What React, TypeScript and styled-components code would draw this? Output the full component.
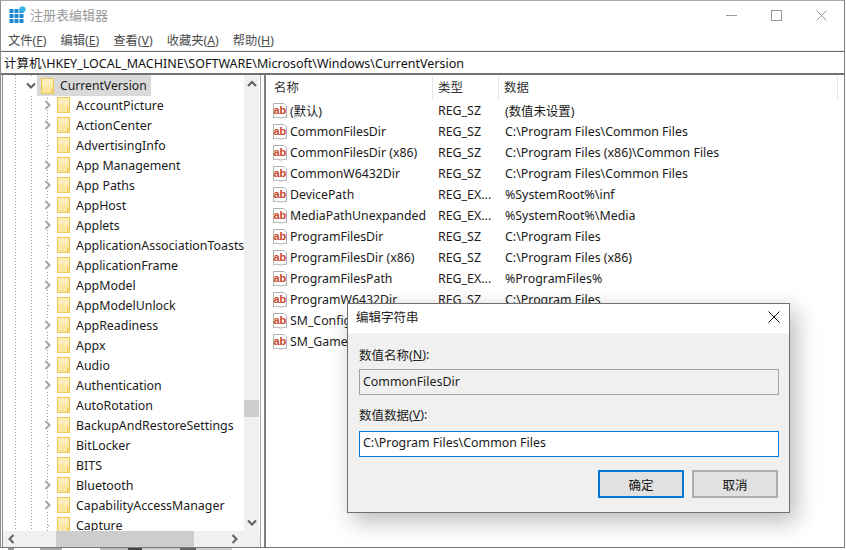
import React from "react";
import styled, { createGlobalStyle } from "styled-components";

const GlobalStyle = createGlobalStyle`
    html, body {
        margin: 0;
        padding: 0;
        background: #fff;
    }
    * {
        box-sizing: border-box;
    }
`;

const FONT = `"Noto Sans", "Noto Sans CJK SC", sans-serif`;

const Page = styled.div`
    width: 846px;
    height: 550px;
    position: relative;
    overflow: hidden;
    font-family: ${FONT};
    font-size: 12.4px;
    color: #1a1a1a;
    background: #fff;
`;

const Frame = styled.div`
    width: 845px;
    height: 548px;
    display: flex;
    flex-direction: column;
    border-top: 1px solid #a9a9a9;
    border-right: 1px solid #7a7a7a;
    border-left: 1px solid #8c8c8c;
`;

const CutOff = styled.div`
    height: 2px;
    background: linear-gradient(90deg,
        #fff 0 8px, #999 8px 14px, #fff 14px 40px, #aaa 40px 62px, #fff 62px 100px,
        #bbb 100px 128px, #444 128px 142px, #ccc 142px 180px, #666 180px 196px,
        #ccc 196px 232px, #fff 232px 846px);
`;

const TitleBar = styled.div`
    height: 28px;
    flex: none;
    display: flex;
    align-items: center;
    padding-left: 8px;
`;

const TitleText = styled.span`
    margin-left: 4px;
    color: #9a9a9a;
    font-size: 13px;
    flex: 1;
    padding-bottom: 1px;
`;

const WindowButton = styled.div`
    width: 45px;
    height: 28px;
    display: flex;
    align-items: center;
    justify-content: center;
`;

const MenuBar = styled.div`
    height: 22px;
    flex: none;
    display: flex;
    align-items: center;
    gap: 14px;
    padding: 1px 0 0 7px;
    color: #4c4c4c;
    font-size: 12.3px;
    border-bottom: 1px solid #f0f0f0;
`;

const MenuItem = styled.span`
    u {
        text-underline-offset: 1px;
    }
`;

const AddressBar = styled.div`
    height: 24px;
    flex: none;
    display: flex;
    align-items: center;
    padding-left: 3px;
    border-top: 1px solid #6d6d6d;
    border-bottom: 2px solid #6f6f78;
    color: #111;
    font-size: 12.5px;
`;

const Main = styled.div`
    flex: 1;
    min-height: 0;
    display: flex;
    border-bottom: 1px solid #777;
`;

const TreePanel = styled.div`
    width: 259px;
    flex: none;
    margin-left: 1px;
    padding-right: 1px;
    display: grid;
    grid-template-columns: 1fr 15px;
    grid-template-rows: 1fr 16px;
    border-left: 1px solid #8a8a8a;
    border-right: 1px solid #a8a8a8;
    overflow: hidden;
`;

const TreeList = styled.div`
    overflow: hidden;
    white-space: nowrap;
    background-image:
        repeating-linear-gradient(180deg, #9a9a9a 0 1px, transparent 1px 3px),
        repeating-linear-gradient(180deg, #9a9a9a 0 1px, transparent 1px 3px);
    background-size: 1px 100%;
    background-position: 12px 0, 28px 0;
    background-repeat: no-repeat;
`;

const CurrentRow = styled.div`
    height: 21px;
    display: flex;
    align-items: center;
    padding-left: 21px;
    margin-bottom: -1px;
    font-size: 12.2px;
`;

const CurrentToggle = styled.div`
    width: 13px;
    height: 20px;
    flex: none;
    display: flex;
    align-items: center;
    justify-content: center;
    background: #fff;
`;

const CurrentLabel = styled.div`
    height: 21px;
    display: flex;
    align-items: center;
    gap: 6px;
    padding: 0 4px;
    background: #d9d9d9;
`;

const Children = styled.div`
    background-image: repeating-linear-gradient(180deg, #9a9a9a 0 1px, transparent 1px 3px);
    background-size: 1px 100%;
    background-position: 44px 0;
    background-repeat: no-repeat;
`;

const TreeRow = styled.div`
    height: 20px;
    display: flex;
    align-items: center;
    padding-left: 36px;
    gap: 6px;
`;

const Toggle = styled.div<{ $leaf: boolean }>`
    width: 16px;
    height: ${props => props.$leaf ? "1px" : "13px"};
    margin-right: -4px;
    flex: none;
    display: flex;
    align-items: center;
    justify-content: center;
    background: ${props => props.$leaf
        ? "repeating-linear-gradient(90deg, transparent 0 9px, #9a9a9a 9px 10px, transparent 10px 12px)"
        : "transparent"};
`;

const ChevronBack = styled.span`
    display: flex;
    background: #fff;
`;

const VScroll = styled.div`
    background: #f0f0f0;
    display: flex;
    flex-direction: column;
    align-items: center;
`;

const VThumb = styled.div`
    width: 15px;
    height: 17px;
    margin-top: 308px;
    background: #cdcdcd;
`;

const ScrollArrow = styled.div<{ $end?: boolean }>`
    height: 17px;
    width: 15px;
    flex: none;
    display: flex;
    align-items: center;
    justify-content: center;
    margin-top: ${props => props.$end ? "auto" : "0"};
`;

const HScroll = styled.div`
    grid-column: 1 / 3;
    margin-right: -1px;
    background: #f0f0f0;
    display: flex;
    align-items: center;
    padding-right: 17px;
`;

const HArrow = styled.div`
    width: 17px;
    height: 16px;
    flex: none;
    display: flex;
    align-items: center;
    justify-content: center;
`;

const HThumb = styled.div`
    width: 138px;
    height: 16px;
    margin-left: 36px;
    background: #cdcdcd;
    margin-right: auto;
`;

const ValuePanel = styled.div`
    flex: 1;
    min-width: 0;
    margin-left: 3px;
    border-left: 2px solid #7f7f7f;
    overflow: hidden;
`;

const HeaderRow = styled.div`
    height: 25px;
    display: flex;
    color: #333;
`;

const HeaderCell = styled.div<{ $width: number }>`
    width: ${props => props.$width}px;
    flex: none;
    display: flex;
    align-items: center;
    padding: 0 0 1px 5px;
    border-right: 1px solid #e5e5e5;
    margin: 1px 0;
    &:first-child {
        padding-left: 8px;
    }
`;

const ValueRow = styled.div`
    height: 21px;
    display: flex;
    align-items: center;
    white-space: nowrap;
`;

const NameCell = styled.div`
    width: 168px;
    flex: none;
    display: flex;
    align-items: center;
    gap: 2px;
    padding-left: 6px;
    overflow: hidden;
    font-size: 12.3px;
`;

const TypeCell = styled.div`
    width: 71px;
    flex: none;
    padding-left: 4px;
`;

const DataCell = styled.div`
    flex: 1;
`;

const Dialog = styled.div`
    position: absolute;
    left: 347px;
    top: 303px;
    width: 443px;
    height: 210px;
    display: flex;
    flex-direction: column;
    background: #f0f0f0;
    border: 1px solid #6f6f6f;
    box-shadow: 6px 8px 22px rgba(0, 0, 0, 0.28);
`;

const DialogTitleBar = styled.div`
    height: 29px;
    flex: none;
    display: flex;
    align-items: center;
    justify-content: space-between;
    padding: 0 9px 4px 8px;
    background: #fff;
    color: #222;
    font-size: 12.5px;
`;

const DialogBody = styled.div`
    flex: 1;
    padding: 9px 10px 0 11px;
    display: flex;
    flex-direction: column;
`;

const FieldLabel = styled.label<{ $gap: number }>`
    height: 24px;
    margin-bottom: ${props => props.$gap}px;
    display: flex;
    align-items: center;
    color: #222;
    font-size: 12.5px;
`;

const Field = styled.div<{ $focus?: boolean }>`
    height: 26px;
    display: flex;
    align-items: center;
    padding: 0 0 ${props => props.$focus ? "3px" : "1px"} 3px;
    margin-bottom: 7px;
    background: ${props => props.$focus ? "#fff" : "#f0f0f0"};
    border: 1px solid ${props => props.$focus ? "#0078d7" : "#a3a3a3"};
    color: #1a1a1a;
`;

const ButtonRow = styled.div`
    display: flex;
    justify-content: flex-end;
    gap: 8px;
    margin-top: 6px;
    padding-right: 1px;
`;

const DialogButton = styled.div<{ $primary?: boolean }>`
    width: 86px;
    height: 28px;
    display: flex;
    align-items: center;
    justify-content: center;
    background: #e1e1e1;
    border: 2px solid ${props => props.$primary ? "#0078d7" : "#adadad"};
    color: #111;
    font-size: 12.5px;
`;

function AppIcon() {
    const cells = [[0, 3], [5, 3], [10, 3], [0, 8], [5, 8], [10, 8], [0, 13], [5, 13], [10, 13]];
    return (
        <svg width="17" height="18" viewBox="0 0 17 18">
            {cells.map(([x, y], i) => <rect key={i} x={x + 0.5} y={y} width="4" height="4" fill="#1b8ad0" />)}
            <path d="M12 0.5 L15 0.5 L16.5 2 L16.5 4.5 L15 6 L12 6 L10.5 4.5 L10.5 2 Z" fill="#35b4e8" />
        </svg>
    );
}

function FolderIcon() {
    return (
        <svg width="13" height="16" viewBox="0 0 13 16" style={{ flex: "none" }}>
            <rect x="0.5" y="0.5" width="12" height="15" fill="#fde7a0" stroke="#ecc653" />
            <rect x="1" y="1" width="11" height="7" fill="#fdeeb9" />
            <path d="M10.5 15.5 V11.5 H12.5" fill="none" stroke="#ecc653" />
        </svg>
    );
}

function ChevronRight({ color = "#a6a6a6" }: { color?: string }) {
    return (
        <svg width="7" height="10" viewBox="0 0 7 10">
            <path d="M1.5 1 L5.5 5 L1.5 9" fill="none" stroke={color} strokeWidth="2" />
        </svg>
    );
}

function ChevronLeft() {
    return (
        <svg width="7" height="10" viewBox="0 0 7 10">
            <path d="M5.5 1 L1.5 5 L5.5 9" fill="none" stroke="#606060" strokeWidth="2" />
        </svg>
    );
}

function ChevronDown() {
    return (
        <svg width="10" height="8" viewBox="0 0 10 8">
            <path d="M1 1.5 L5 5.5 L9 1.5" fill="none" stroke="#606060" strokeWidth="2" />
        </svg>
    );
}

function ChevronUp() {
    return (
        <svg width="10" height="8" viewBox="0 0 10 8">
            <path d="M1 6 L5 2 L9 6" fill="none" stroke="#606060" strokeWidth="2" />
        </svg>
    );
}

function StringIcon() {
    return (
        <svg width="16" height="16" viewBox="0 0 16 16" style={{ flex: "none" }}>
            <path d="M1.5 0.5 H12 L14.5 3 V14.5 C12 13.5 10 15.8 7 14.7 C5 14 3 14 1.5 15 Z" fill="#fff" stroke="#b0b0b0" />
            <text x="1.4" y="10.5" fontFamily="Liberation Sans" fontWeight="700" fontSize="11" fill="#cc4429">ab</text>
        </svg>
    );
}

interface ITreeItem {
    name: string;
    leaf?: boolean;
}

const treeItems: ITreeItem[] = [
    { name: "AccountPicture" },
    { name: "ActionCenter" },
    { name: "AdvertisingInfo", leaf: true },
    { name: "App Management" },
    { name: "App Paths" },
    { name: "AppHost" },
    { name: "Applets" },
    { name: "ApplicationAssociationToasts", leaf: true },
    { name: "ApplicationFrame" },
    { name: "AppModel" },
    { name: "AppModelUnlock", leaf: true },
    { name: "AppReadiness" },
    { name: "Appx" },
    { name: "Audio" },
    { name: "Authentication" },
    { name: "AutoRotation", leaf: true },
    { name: "BackupAndRestoreSettings" },
    { name: "BitLocker", leaf: true },
    { name: "BITS", leaf: true },
    { name: "Bluetooth" },
    { name: "CapabilityAccessManager" },
    { name: "Capture", leaf: true },
];

const values = [
    ["(默认)", "REG_SZ", "(数值未设置)"],
    ["CommonFilesDir", "REG_SZ", "C:\\Program Files\\Common Files"],
    ["CommonFilesDir (x86)", "REG_SZ", "C:\\Program Files (x86)\\Common Files"],
    ["CommonW6432Dir", "REG_SZ", "C:\\Program Files\\Common Files"],
    ["DevicePath", "REG_EX...", "%SystemRoot%\\inf"],
    ["MediaPathUnexpanded", "REG_EX...", "%SystemRoot%\\Media"],
    ["ProgramFilesDir", "REG_SZ", "C:\\Program Files"],
    ["ProgramFilesDir (x86)", "REG_SZ", "C:\\Program Files (x86)"],
    ["ProgramFilesPath", "REG_EX...", "%ProgramFiles%"],
    ["ProgramW6432Dir", "REG_SZ", "C:\\Program Files"],
    ["SM_ConfigureApps", "REG_SZ", ""],
    ["SM_GamesName", "REG_SZ", ""],
];

const menus = [["文件(", "F", ")"], ["编辑(", "E", ")"], ["查看(", "V", ")"], ["收藏夹(", "A", ")"], ["帮助(", "H", ")"]];

function App() {
    return (
        <Page>
            <GlobalStyle />
            <Frame>
                <TitleBar>
                    <AppIcon />
                    <TitleText>注册表编辑器</TitleText>
                    <WindowButton>
                        <svg width="11" height="11" viewBox="0 0 11 11"><path d="M0 5.5 H11" stroke="#999" /></svg>
                    </WindowButton>
                    <WindowButton>
                        <svg width="11" height="11" viewBox="0 0 11 11"><rect x="0.5" y="0.5" width="10" height="10" fill="none" stroke="#999" /></svg>
                    </WindowButton>
                    <WindowButton>
                        <svg width="11" height="11" viewBox="0 0 11 11"><path d="M0.5 0.5 L10.5 10.5 M10.5 0.5 L0.5 10.5" stroke="#999" /></svg>
                    </WindowButton>
                </TitleBar>
                <MenuBar>
                    {menus.map(([before, key, after]) => (
                        <MenuItem key={key}>{before}<u>{key}</u>{after}</MenuItem>
                    ))}
                </MenuBar>
                <AddressBar>计算机\HKEY_LOCAL_MACHINE\SOFTWARE\Microsoft\Windows\CurrentVersion</AddressBar>
                <Main>
                    <TreePanel>
                        <TreeList>
                            <CurrentRow>
                                <CurrentToggle><ChevronDown /></CurrentToggle>
                                <CurrentLabel>
                                    <FolderIcon />
                                    CurrentVersion
                                </CurrentLabel>
                            </CurrentRow>
                            <Children>
                                {treeItems.map(item => (
                                    <TreeRow key={item.name}>
                                        <Toggle $leaf={!!item.leaf}>
                                            {!item.leaf && <ChevronBack><ChevronRight /></ChevronBack>}
                                        </Toggle>
                                        <FolderIcon />
                                        {item.name}
                                    </TreeRow>
                                ))}
                            </Children>
                        </TreeList>
                        <VScroll>
                            <ScrollArrow><ChevronUp /></ScrollArrow>
                            <VThumb />
                            <ScrollArrow $end><ChevronDown /></ScrollArrow>
                        </VScroll>
                        <HScroll>
                            <HArrow><ChevronLeft /></HArrow>
                            <HThumb />
                            <HArrow><ChevronRight color="#606060" /></HArrow>
                        </HScroll>
                    </TreePanel>
                    <ValuePanel>
                        <HeaderRow>
                            <HeaderCell $width={167}>名称</HeaderCell>
                            <HeaderCell $width={66}>类型</HeaderCell>
                            <HeaderCell $width={339}>数据</HeaderCell>
                        </HeaderRow>
                        {values.map(([name, type, data]) => (
                            <ValueRow key={name}>
                                <NameCell><StringIcon />{name}</NameCell>
                                <TypeCell>{type}</TypeCell>
                                <DataCell>{data}</DataCell>
                            </ValueRow>
                        ))}
                    </ValuePanel>
                </Main>
            </Frame>
            <CutOff />
            <Dialog>
                <DialogTitleBar>
                    编辑字符串
                    <svg width="12" height="12" viewBox="0 0 12 12"><path d="M0.5 0.5 L11.5 11.5 M11.5 0.5 L0.5 11.5" stroke="#111" /></svg>
                </DialogTitleBar>
                <DialogBody>
                    <FieldLabel $gap={3}>数值名称(<u>N</u>):</FieldLabel>
                    <Field>CommonFilesDir</Field>
                    <FieldLabel $gap={5}>数值数据(<u>V</u>):</FieldLabel>
                    <Field $focus>C:\Program Files\Common Files</Field>
                    <ButtonRow>
                        <DialogButton $primary>确定</DialogButton>
                        <DialogButton>取消</DialogButton>
                    </ButtonRow>
                </DialogBody>
            </Dialog>
        </Page>
    );
}

export default App;
